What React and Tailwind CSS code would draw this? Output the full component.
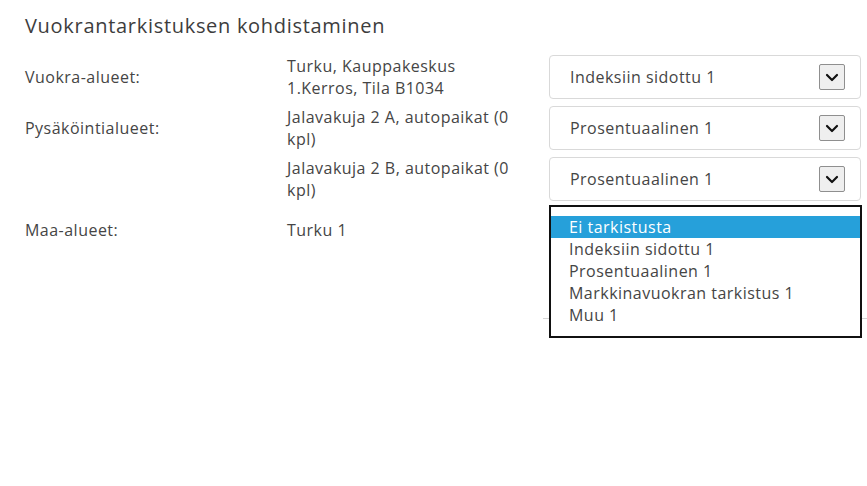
import React from 'react';

const rows = [
  { label: 'Vuokra-alueet:', value: ['Turku, Kauppakeskus', '1.Kerros, Tila B1034'], selected: 'Indeksiin sidottu 1' },
  { label: 'Pysäköintialueet:', value: ['Jalavakuja 2 A, autopaikat (0', 'kpl)'], selected: 'Prosentuaalinen 1' },
  { label: '', value: ['Jalavakuja 2 B, autopaikat (0', 'kpl)'], selected: 'Prosentuaalinen 1' },
  { label: 'Maa-alueet:', value: ['Turku 1'], selected: 'Ei tarkistusta', open: true },
];

const options = ['Ei tarkistusta', 'Indeksiin sidottu 1', 'Prosentuaalinen 1', 'Markkinavuokran tarkistus 1', 'Muu 1'];

function Chevron() {
  return (
    <span className="flex h-[26px] w-[26px] items-center justify-center rounded-[2px] border border-[#8f8f8f] bg-[#efefef]">
      <svg width="14" height="9" viewBox="0 0 14 9" fill="none">
        <path d="M2 2l5 5 5-5" stroke="#111" strokeWidth="2.2" strokeLinecap="round" strokeLinejoin="round" />
      </svg>
    </span>
  );
}

function Select({ value, open }) {
  return (
    <div className="relative">
      <div className="flex h-[44px] items-center justify-between rounded-[4px] border border-[#d9d9d9] bg-white pl-[20px] pr-[15px]">
        <span className={open ? 'invisible' : ''}>{value}</span>
        <Chevron />
      </div>
      {open && (
        <ul className="absolute left-0 right-[-1px] top-[-3px] z-10 border-2 border-[#111] bg-white pt-[9px] pb-[10px]">
          {options.map((o, i) => (
            <li
              key={o}
              className={`h-[22px] pl-[18px] leading-[22px] ${i === 0 ? 'bg-[#26a0da] text-white' : ''}`}
            >
              {o}
            </li>
          ))}
        </ul>
      )}
    </div>
  );
}

export default function App() {
  return (
    <div className="h-[486px] w-[867px] bg-white text-[16px] tracking-[0.03em] text-[#454545]" style={{ fontFamily: '"Open Sans", "Noto Sans", sans-serif' }}>
      <h1 className="pl-[25px] pt-[12px] text-[20px] leading-[28px] tracking-[0.035em] text-[#3d3d3d]">Vuokrantarkistuksen kohdistaminen</h1>
      <div className="mt-[15px] flex flex-col gap-[7px] pl-[25px] pr-[6px]">
        {rows.map((r, i) => (
          <div key={i} className="grid grid-cols-[262px_262px_312px] items-center">
            <div>{r.label}</div>
            <div className="whitespace-nowrap leading-[22px]">
              {r.value.map((v) => (
                <div key={v}>{v}</div>
              ))}
            </div>
            <Select value={r.selected} open={r.open} />
          </div>
        ))}
      </div>
      <div className="ml-[543px] mt-[66px] h-px bg-[#d4d4d4]" />
    </div>
  );
}
